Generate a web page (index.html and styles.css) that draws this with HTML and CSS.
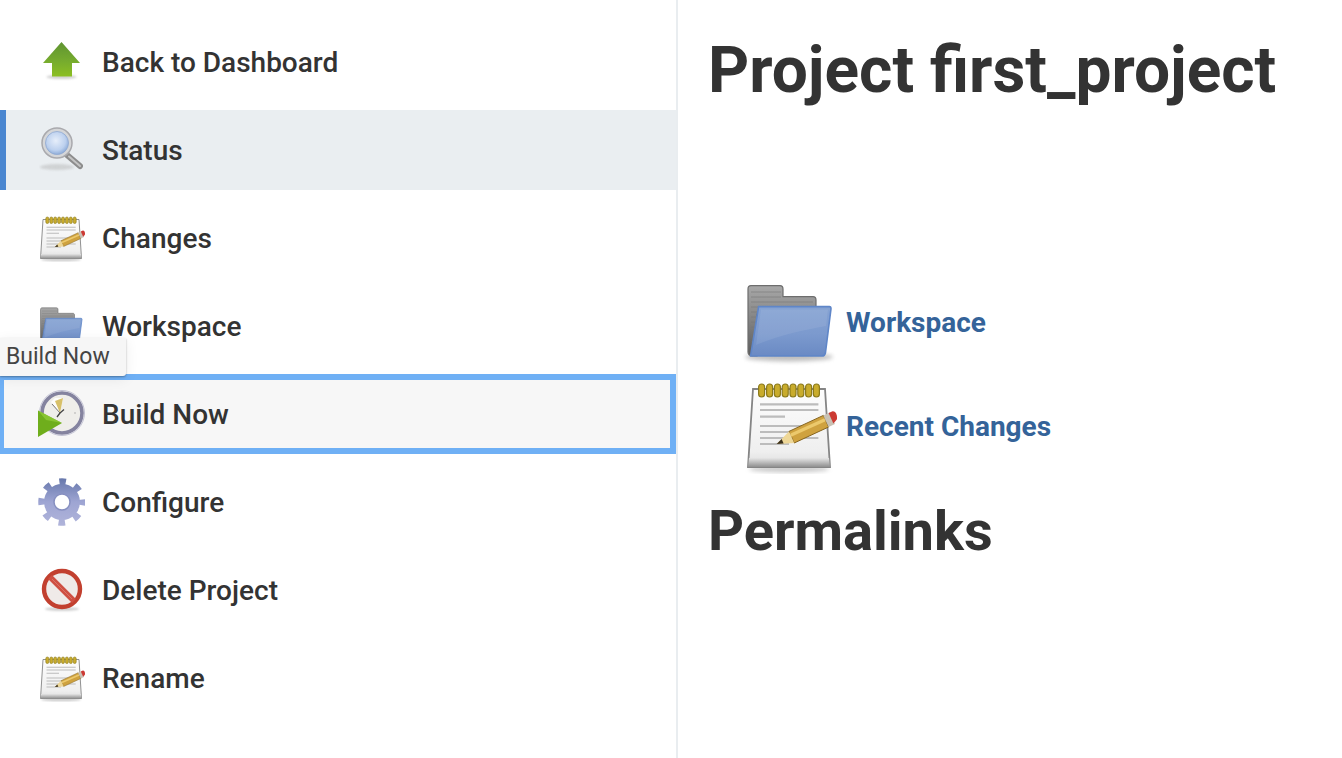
FILE: index.html
```html
<!DOCTYPE html>
<html lang="en">
<head>
<meta charset="utf-8">
<title>Project first_project</title>
<link rel="stylesheet" href="styles.css">
</head>
<body>
<svg class="defs" xmlns="http://www.w3.org/2000/svg" aria-hidden="true">
  <defs>
    <filter id="shade" x="-30%" y="-100%" width="160%" height="300%"><feGaussianBlur stdDeviation="1"/></filter>
    <linearGradient id="gArrow" x1="0" y1="0" x2="0" y2="1"><stop offset="0" stop-color="#5f9432"/><stop offset=".55" stop-color="#76ab2e"/><stop offset="1" stop-color="#8cbf22"/></linearGradient>
    <radialGradient id="gLens" cx=".45" cy=".4" r=".6"><stop offset="0" stop-color="#e6eefa"/><stop offset=".7" stop-color="#bcd0ee"/><stop offset="1" stop-color="#8fadd9"/></radialGradient>
    <linearGradient id="gFolder" x1="0" y1="0" x2="0" y2="1"><stop offset="0" stop-color="#86a3d3"/><stop offset=".55" stop-color="#7c9ace"/><stop offset="1" stop-color="#6a8ac4"/></linearGradient>
    <linearGradient id="gBack" x1="0" y1="0" x2="0" y2="1"><stop offset="0" stop-color="#a8a8a8"/><stop offset="1" stop-color="#5c5c5c"/></linearGradient>
    <linearGradient id="gPaper" x1="0" y1="0" x2="0" y2="1"><stop offset="0" stop-color="#fdfdfd"/><stop offset=".8" stop-color="#efefef"/><stop offset="1" stop-color="#dcdcdc"/></linearGradient>
    <linearGradient id="gBand" x1="0" y1="0" x2="0" y2="1"><stop offset="0" stop-color="#e6e6e6"/><stop offset="1" stop-color="#8f8f8f"/></linearGradient>
    <linearGradient id="gGear" gradientUnits="userSpaceOnUse" x1="0" y1="0" x2="0" y2="48"><stop offset="0" stop-color="#6677ab"/><stop offset=".5" stop-color="#9ea5d3"/><stop offset="1" stop-color="#b0b4da"/></linearGradient>
    <symbol id="i-up" viewBox="0 0 48 48">
      <ellipse cx="24.500" cy="39" rx="15" ry="2" fill="#999" opacity=".45" filter="url(#shade)"/>
      <path d="M24.500 4 43 25H35V38.500H15V25H6Z" fill="url(#gArrow)"/>
    </symbol>
    <symbol id="i-search" viewBox="0 0 48 48">
      <ellipse cx="20" cy="41" rx="17" ry="3" fill="#aaa" opacity=".4" filter="url(#shade)"/>
      <path d="M30 29 43 40" stroke="#8d8d8d" stroke-width="6" stroke-linecap="round"/>
      <path d="M32 30.500 43 40" stroke="#c4c4c4" stroke-width="2" stroke-linecap="round"/>
      <circle cx="20" cy="17" r="15" fill="#d5d6d8" stroke="#a9a9ad" stroke-width="1.500"/>
      <circle cx="20" cy="17" r="11.500" fill="url(#gLens)" stroke="#8fa8d0" stroke-width=".8"/>
    </symbol>
    <symbol id="i-notepad" viewBox="0 0 48 48">
      <ellipse cx="24" cy="45.500" rx="20" ry="1.800" fill="#999" opacity=".5" filter="url(#shade)"/>
      <path d="M6 5.500H42L44.500 44.500H3.500Z" fill="url(#gPaper)" stroke="#858585" stroke-width=".9"/>
      <path d="M4 40H44L44.500 44.500H3.500Z" fill="url(#gBand)"/>
      <path d="M9.500 13.200H38.700M9.500 16H38.700M9.500 19.300H22M9.500 24H38.700M9.500 27H32M9.500 30H38.700M9.500 33H24" stroke="#bcbcbc" stroke-width="1.100"/>
      <g fill="#c9ac2c" stroke="#8b7a1c" stroke-width=".6">
        <rect x="8.800" y="3" width="3" height="6.500" rx="1.500"/><rect x="12.800" y="3" width="3" height="6.500" rx="1.500"/><rect x="16.700" y="3" width="3" height="6.500" rx="1.500"/><rect x="20.600" y="3" width="3" height="6.500" rx="1.500"/><rect x="24.500" y="3" width="3" height="6.500" rx="1.500"/><rect x="28.400" y="3" width="3" height="6.500" rx="1.500"/><rect x="32.300" y="3" width="3" height="6.500" rx="1.500"/><rect x="36.200" y="3" width="3" height="6.500" rx="1.500"/>
      </g>
      <path d="M20 35H36" stroke="#888" stroke-width="2" opacity=".45" filter="url(#shade)"/>
      <path d="M24 26.700 41.200 18.700 43.800 24.500 26.600 32.500Z" fill="#cfa23f" stroke="#86641d" stroke-width=".5"/>
      <path d="M24.800 28.600 42 20.900" stroke="#ecc96c" stroke-width="1.600"/>
      <path d="M17.800 33 24 26.700 26.600 32.500Z" fill="#eed797"/>
      <path d="M17.800 33 20.300 30.500 21.300 32.800Z" fill="#3a2f1a"/>
      <path d="M41.200 18.700 44.300 17.300 47 23 43.800 24.500Z" fill="#c9c2b5"/>
      <path d="M43.800 17.500 45.800 16.600C47.800 16.300 48.500 20 47.700 21L46.200 22.700Z" fill="#cc3a33"/>
    </symbol>
    <symbol id="i-folder" viewBox="0 0 48 48">
      <ellipse cx="24" cy="41.500" rx="22" ry="2.200" fill="#888" opacity=".55" filter="url(#shade)"/>
      <path d="M3.500 7.500C3.500 6.500 4.200 5.800 5 5.800H19.500C20.500 5.800 21 6.500 21 7.500V11.300H36C36.900 11.300 37.500 12 37.500 13V20H8V41H5.500C4.300 41 3.500 40 3.500 39Z" fill="url(#gBack)" stroke="#6d6d6d" stroke-width=".6"/>
      <path d="M5 9H20M5 11.500H20M5 14H36M5 16.500H36M5 19H36M5 21.500H8M5 24H8M5 26.500H7.500M5 29H7M5 31.500H6.500M5 34H6.500" stroke="#777" stroke-width=".5" opacity=".6"/>
      <path d="M8.800 16.300H44.200C44.700 16.300 45 16.800 45 17.400L42.200 39.500C42 40.400 41.500 41 40.500 41H4.800Z" fill="url(#gFolder)" stroke="#5f86c8" stroke-width=".8"/>
      <path d="M10 17.800H43.500L42.500 26C31 28 18 31 7.500 35.500Z" fill="#fff" opacity=".08"/>
    </symbol>
    <symbol id="i-clock" viewBox="0 0 48 48">
      <circle cx="25" cy="23" r="20" fill="#efeeea" stroke="#84839f" stroke-width="3.600"/>
      <circle cx="25" cy="23" r="22.500" fill="none" stroke="#c0c0d2" stroke-width="1"/>
      <path d="M23 23 14 12 18 8H26Z" fill="#fdfdfb"/>
      <path d="M23 23 18 11 26 8Z" fill="#d7c069"/>
      <path d="M23 23 15 14" stroke="#777" stroke-width="1"/>
      <path d="M23 23 27 19.500M23 23 20 27" stroke="#444" stroke-width="1.300"/>
      <circle cx="38" cy="23" r=".8" fill="#aaa"/>
      <path d="M1 20.500 25 33 1 47Z" fill="#6fae1c"/>
      <path d="M1 20.500 25 33 9 30Z" fill="#93cf3a" opacity=".7"/>
    </symbol>
    <symbol id="i-gear" viewBox="0 0 48 48">
      <circle cx="25" cy="24" r="20" fill="none" stroke="url(#gGear)" stroke-width="7.500" stroke-dasharray="6.500 9.208" stroke-dashoffset="3.250"/>
      <circle cx="25" cy="24" r="12.500" fill="none" stroke="url(#gGear)" stroke-width="11"/>
      <circle cx="25" cy="24" r="8" fill="#fff" stroke="#868fc0" stroke-width="1.500"/>
    </symbol>
    <symbol id="i-delete" viewBox="0 0 48 48">
      <ellipse cx="25" cy="43" rx="17" ry="1.800" fill="#999" opacity=".5" filter="url(#shade)"/>
      <circle cx="25" cy="23" r="18" fill="#efeae8" stroke="#c2402f" stroke-width="4.400"/>
      <path d="M13 11 37 35" stroke="#cf4f42" stroke-width="5.500"/>
      <path d="M15 13 35 33" stroke="#e08a80" stroke-width="1" opacity=".6"/>
    </symbol>
  </defs>
</svg>
<div class="page">
  <nav class="side">
    <a class="task"><svg class="ic"><use href="#i-up"/></svg><span>Back to Dashboard</span></a>
    <a class="task active"><svg class="ic"><use href="#i-search"/></svg><span>Status</span></a>
    <a class="task"><svg class="ic"><use href="#i-notepad"/></svg><span>Changes</span></a>
    <a class="task"><svg class="ic"><use href="#i-folder"/></svg><span>Workspace</span></a>
    <a class="task focus"><svg class="ic"><use href="#i-clock"/></svg><span>Build Now</span><span class="tip">Build Now</span></a>
    <a class="task"><svg class="ic"><use href="#i-gear"/></svg><span>Configure</span></a>
    <a class="task"><svg class="ic"><use href="#i-delete"/></svg><span>Delete Project</span></a>
    <a class="task"><svg class="ic"><use href="#i-notepad"/></svg><span>Rename</span></a>
  </nav>
  <main class="main">
    <h1 class="title">Project first_project</h1>
    <ul class="links">
      <li class="link"><svg class="big"><use href="#i-folder"/></svg><a>Workspace</a></li>
      <li class="link"><svg class="big"><use href="#i-notepad"/></svg><a>Recent Changes</a></li>
    </ul>
    <h2 class="sub">Permalinks</h2>
  </main>
</div>
</body>
</html>
```
FILE: styles.css
```css
* { box-sizing: border-box; }
html, body { margin: 0; height: 100%; overflow: hidden; background: #fff; }
body { font-family: Roboto, "Liberation Sans", sans-serif; color: #333; }
.defs { display: block; width: 0; height: 0; }
.page { display: flex; height: 758px; }
.side {
  width: 678px;
  flex: none;
  padding-top: 22px;
  border-right: 2px solid #e9edf0;
  display: flex;
  flex-direction: column;
  gap: 8px;
}
.task {
  position: relative;
  display: flex;
  align-items: center;
  gap: 17px;
  height: 80px;
  padding-left: 37px;
  font-size: 28px;
  font-weight: 500;
  color: #333;
}
.ic { width: 48px; height: 48px; flex: none; filter: blur(.55px); }
.active { background: #eaeef1; border-left: 6px solid #4a86d0; padding-left: 31px; }
.focus {
  background: #f7f7f7;
  border: solid #6fb0f5;
  border-width: 6px 6px 6px 4px;
  padding-left: 33px;
}
.tip {
  position: absolute;
  left: -4px;
  top: -42px;
  width: 126px;
  height: 38px;
  padding: 0 0 2px 6px;
  display: flex;
  align-items: center;
  background: #f6f6f6;
  border-radius: 0 0 3px 0;
  box-shadow: 0 1px 2px rgba(0,0,0,.3), 0 3px 14px rgba(0,0,0,.07);
  font-size: 23px;
  font-weight: 400;
  color: #444;
}
.main { flex: 1; padding-left: 30px; }
.title { margin: 32px 0 0; font-size: 64px; line-height: 78px; font-weight: 700; color: #333; }
.links { list-style: none; margin: 164px 0 0 33px; padding: 0; display: flex; flex-direction: column; gap: 8px; }
.link { display: flex; align-items: center; gap: 9px; height: 96px; font-size: 28px; font-weight: 700; color: #346399; }
.big { width: 96px; height: 96px; flex: none; filter: blur(.4px); }
.sub { margin: 22px 0 0; font-size: 56px; line-height: 70px; font-weight: 700; color: #333; }
```
